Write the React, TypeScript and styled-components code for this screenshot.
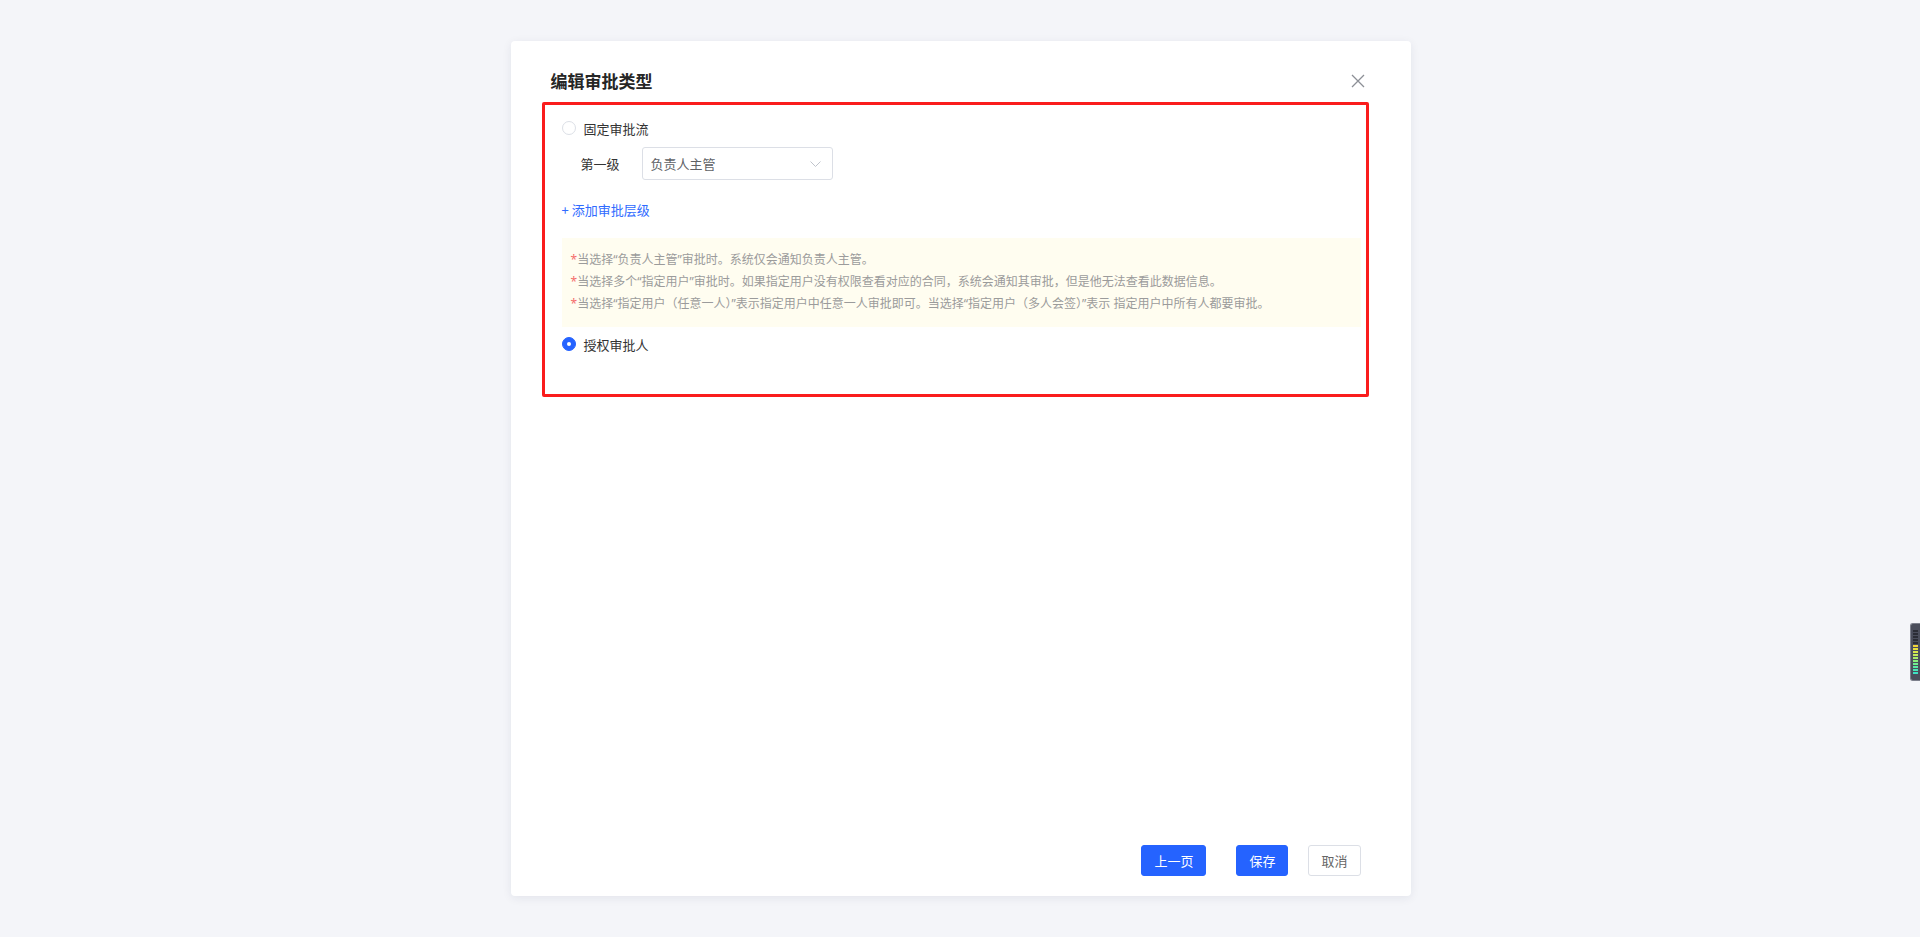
import styled, { createGlobalStyle } from "styled-components";

const GlobalStyle = createGlobalStyle`
body{
    margin:0;
    background:#f4f5f9;
    font-family:"Noto Sans CJK SC","Noto Sans",sans-serif;
    color:#333;
}
*{ box-sizing:border-box; }
`

const Page = styled.div`
height:100vh;
display:flex;
align-items:center;
justify-content:center;
`

const Dialog = styled.div`
width:900px;
height:855px;
margin-left:1px;
background:#fff;
border-radius:4px;
box-shadow:0 2px 10px rgba(30,40,80,0.08);
display:flex;
flex-direction:column;
`

const Header = styled.div`
display:flex;
align-items:center;
justify-content:space-between;
height:26px;
margin:27px 46px 0 40px;
`

const Title = styled.h2`
margin:0;
font-size:17px;
font-weight:700;
color:#262626;
line-height:26px;
`

const CloseBtn = styled.button`
border:0;
background:none;
padding:0;
width:14px;
height:14px;
display:flex;
cursor:pointer;
`

const Highlight = styled.div`
margin:8px 42px 0 31px;
height:295px;
border:3px solid #fa1c1c;
border-radius:2px;
padding:13px 5px 0 17px;
display:flex;
flex-direction:column;
`

const RadioRow = styled.label`
display:flex;
align-items:center;
gap:8px;
height:20px;
font-size:13px;
color:#333;
cursor:pointer;
`

const RadioDot = styled.span<{ $checked?: boolean }>`
width:14px;
height:14px;
border-radius:50%;
flex:none;
border:1px solid ${p => p.$checked ? "#2563ff" : "#dcdfe6"};
background:${p => p.$checked ? "#2563ff" : "#fff"};
position:relative;
&::after{
    content:"";
    display:${p => p.$checked ? "block" : "none"};
    position:absolute;
    width:4px;
    height:4px;
    border-radius:50%;
    background:#fff;
    left:4px;
    top:4px;
}
`

const LevelRow = styled.div`
display:flex;
align-items:center;
margin:9px 0 0 19px;
`

const LevelLabel = styled.span`
width:61px;
font-size:13px;
color:#333;
`

const Select = styled.div`
width:191px;
height:33px;
border:1px solid #dcdfe6;
border-radius:3px;
display:flex;
align-items:center;
justify-content:space-between;
padding:0 11px 0 8px;
font-size:13px;
color:#606266;
`

const AddLink = styled.a`
display:block;
margin-top:20px;
height:20px;
line-height:20px;
font-size:13px;
color:#2f6bff;
cursor:pointer;
`

const Notice = styled.div`
margin-top:18px;
background:#fffdf0;
padding:11px 9px 12px;
`

const NoticeLine = styled.p`
margin:0;
font-family:"Noto Sans","Noto Sans CJK SC",sans-serif;
font-size:12px;
line-height:22px;
color:#9b9b9b;
white-space:nowrap;
&::before{
    content:"*";
    color:#f56c6c;
}
`

const SecondRadio = styled(RadioRow)`
margin-top:7px;
`

const Spacer = styled.div`
flex:1;
`

const Footer = styled.div`
display:flex;
justify-content:flex-end;
align-items:center;
padding:0 50px 20px 0;
`

const Button = styled.button<{ $primary?: boolean; $gap?: number }>`
height:31px;
padding:0 12px;
margin-left:${p => p.$gap ?? 0}px;
border-radius:3px;
font-family:inherit;
font-size:13px;
cursor:pointer;
border:1px solid ${p => p.$primary ? "#2563ff" : "#dcdfe6"};
background:${p => p.$primary ? "#2563ff" : "#fff"};
color:${p => p.$primary ? "#fff" : "#666"};
`

const Meter = styled.div`
position:fixed;
right:0;
top:623px;
width:10px;
height:58px;
background:#4b4e5c;
border:1px solid #7d808c;
border-right:0;
border-radius:3px 0 0 3px;
display:flex;
flex-direction:column;
justify-content:center;
gap:1px;
padding-left:2px;
`

const MeterBar = styled.span<{ $color: string }>`
width:5px;
height:2px;
background:${p => p.$color};
`

const meterColors = [
    "#2b2d36", "#2b2d36", "#2b2d36", "#2b2d36", "#2b2d36",
    "#f2d43a", "#e9e03e", "#d8e84a", "#c4ec5a", "#a8ee6a",
    "#8aef7c", "#6fee90", "#5aeaa4", "#4ae6b6", "#3ee2c4",
]

const notices = [
    "当选择“负责人主管”审批时。系统仅会通知负责人主管。",
    "当选择多个“指定用户”审批时。如果指定用户没有权限查看对应的合同，系统会通知其审批，但是他无法查看此数据信息。",
    "当选择“指定用户（任意一人）”表示指定用户中任意一人审批即可。当选择“指定用户（多人会签）”表示 指定用户中所有人都要审批。",
]

export default function App() {
    return (
        <>
            <GlobalStyle />
            <Page>
                <Dialog>
                    <Header>
                        <Title>编辑审批类型</Title>
                        <CloseBtn aria-label="关闭">
                            <svg width="14" height="14" viewBox="0 0 14 14">
                                <path d="M1 1L13 13M13 1L1 13" stroke="#8c8f96" strokeWidth="1.3" fill="none" />
                            </svg>
                        </CloseBtn>
                    </Header>
                    <Highlight>
                        <RadioRow>
                            <RadioDot />
                            固定审批流
                        </RadioRow>
                        <LevelRow>
                            <LevelLabel>第一级</LevelLabel>
                            <Select>
                                负责人主管
                                <svg width="11" height="6" viewBox="0 0 11 6">
                                    <polyline points="0.5,0.5 5.5,5.5 10.5,0.5" stroke="#c0c4cc" strokeWidth="1" fill="none" />
                                </svg>
                            </Select>
                        </LevelRow>
                        <AddLink>+ 添加审批层级</AddLink>
                        <Notice>
                            {notices.map(n => <NoticeLine key={n}>{n}</NoticeLine>)}
                        </Notice>
                        <SecondRadio>
                            <RadioDot $checked />
                            授权审批人
                        </SecondRadio>
                    </Highlight>
                    <Spacer />
                    <Footer>
                        <Button $primary>上一页</Button>
                        <Button $primary $gap={30}>保存</Button>
                        <Button $gap={20}>取消</Button>
                    </Footer>
                </Dialog>
            </Page>
            <Meter>
                {meterColors.map((c, i) => <MeterBar key={i} $color={c} />)}
            </Meter>
        </>
    )
}
